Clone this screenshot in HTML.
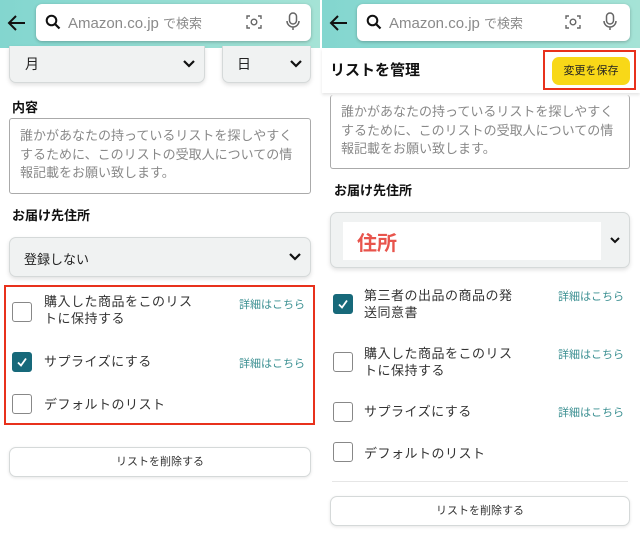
<!DOCTYPE html>
<html><head><meta charset="utf-8"><style>
*{margin:0;padding:0;box-sizing:border-box}
body{width:640px;height:552px;position:relative;background:#fff;font-family:"Liberation Sans","Noto Sans CJK JP",sans-serif;color:#222;overflow:hidden}
.a{position:absolute}
.hdr{position:absolute;top:0;height:48px;background:linear-gradient(90deg,#83d6cf,#a5e3d6)}
.sb{position:absolute;top:4px;height:37px;background:#fff;border-radius:6px;box-shadow:0 1px 3px rgba(0,0,0,.25)}
.sb .ph{position:absolute;left:32px;top:9px;font-size:15px;color:#8a8a8a}
.sel{position:absolute;background:#f0f2f2;border:1px solid #d5d9d9;border-radius:7px;box-shadow:0 2px 4px rgba(0,0,0,.12)}
.ta{position:absolute;border:1px solid #aaa;border-radius:3px;padding:8px 6px 8px 10px;font-size:13px;line-height:18.5px;color:#888;letter-spacing:0;white-space:nowrap}
.lbl{position:absolute;font-size:13px;font-weight:bold;color:#111}
.cb{position:absolute;width:20px;height:20px;border:1px solid #888;border-radius:3px;background:#fff}
.cb.on{background:#17697a;border-color:#17697a}
.t{position:absolute;font-size:13px;line-height:17px;color:#333;letter-spacing:.5px}
.lk{position:absolute;font-size:11px;color:#3a8f91;letter-spacing:0}
.btn{position:absolute;height:30px;border:1px solid #d5d9d9;border-radius:7px;background:#fff;box-shadow:0 1px 3px rgba(0,0,0,.1);font-size:11px;text-align:center;line-height:28px;color:#333}
</style></head><body>

<!-- LEFT -->
<div class="hdr" style="left:0;width:320px"></div>
<svg class="a" style="left:7px;top:13px" width="20" height="20" viewBox="0 0 20 20"><path d="M18 10H3M9 3L2 10l7 7" stroke="#111" stroke-width="2" fill="none"/></svg>
<div class="sb" style="left:36px;width:275px">
<svg class="a" style="left:9px;top:10px" width="16" height="16" viewBox="0 0 16 16"><circle cx="6.5" cy="6.5" r="4.8" stroke="#111" stroke-width="2" fill="none"/><path d="M10 10l4.5 4.5" stroke="#111" stroke-width="2.2"/></svg>
<div class="ph">Amazon.co.jp <span style="font-size:13px">で検索</span></div>
<svg class="a" style="left:210px;top:10px" width="16" height="16" viewBox="0 0 16 16" fill="none" stroke="#666" stroke-width="1.4"><path d="M1 5V2h3M12 2h3v3M15 11v3h-3M4 14H1v-3"/><circle cx="8" cy="8" r="2.8"/></svg>
<svg class="a" style="left:250px;top:8px" width="14" height="20" viewBox="0 0 14 20" fill="none" stroke="#666" stroke-width="1.5"><rect x="3.5" y="1" width="7" height="11" rx="3.5"/><path d="M1 9a6 6 0 0 0 12 0M7 15v3"/></svg>
</div>
<div class="sel" style="left:9px;top:46px;width:196px;height:37px;border-top:none;border-radius:0 0 7px 7px"><span class="a" style="left:15px;top:8px;font-size:14px">月</span>
<svg class="a" style="left:172px;top:13px" width="14" height="10" viewBox="0 0 14 10"><path d="M2 2l5 5 5-5" stroke="#111" stroke-width="2.2" fill="none"/></svg></div>
<div class="sel" style="left:222px;top:46px;width:89px;height:37px;border-top:none;border-radius:0 0 7px 7px"><span class="a" style="left:14px;top:8px;font-size:14px">日</span>
<svg class="a" style="left:66px;top:13px" width="14" height="10" viewBox="0 0 14 10"><path d="M2 2l5 5 5-5" stroke="#111" stroke-width="2.2" fill="none"/></svg></div>
<div class="lbl" style="left:12px;top:97px">内容</div>
<div class="ta" style="left:9px;top:118px;width:302px;height:76px">誰かがあなたの持っているリストを探しやすく<br>するために、このリストの受取人についての情<br>報記載をお願い致します。</div>
<div class="lbl" style="left:12px;top:205px">お届け先住所</div>
<div class="sel" style="left:9px;top:237px;width:302px;height:40px"><span class="a" style="left:14px;top:11px;font-size:13px">登録しない</span>
<svg class="a" style="left:278px;top:14px" width="14" height="10" viewBox="0 0 14 10"><path d="M2 2l5 5 5-5" stroke="#111" stroke-width="2.2" fill="none"/></svg></div>
<div class="a" style="left:4px;top:285px;width:311px;height:140px;border:2.5px solid #e8311c"></div>
<div class="cb" style="left:12px;top:302px"></div>
<div class="t" style="left:44px;top:293px">購入した商品をこのリス<br>トに保持する</div>
<div class="lk" style="left:239px;top:296px">詳細はこちら</div>
<div class="cb on" style="left:12px;top:352px"><svg width="18" height="18" viewBox="0 0 18 18"><path d="M5 9.5l3 3 5-7" stroke="#fff" stroke-width="1.8" fill="none"/></svg></div>
<div class="t" style="left:44px;top:353px">サプライズにする</div>
<div class="lk" style="left:239px;top:355px">詳細はこちら</div>
<div class="cb" style="left:12px;top:394px"></div>
<div class="t" style="left:44px;top:396px">デフォルトのリスト</div>
<div class="btn" style="left:9px;top:447px;width:302px">リストを削除する</div>

<!-- RIGHT -->
<div class="hdr" style="left:322px;width:318px"></div>
<svg class="a" style="left:329px;top:13px" width="20" height="20" viewBox="0 0 20 20"><path d="M18 10H3M9 3L2 10l7 7" stroke="#111" stroke-width="2" fill="none"/></svg>
<div class="sb" style="left:357px;width:273px">
<svg class="a" style="left:9px;top:10px" width="16" height="16" viewBox="0 0 16 16"><circle cx="6.5" cy="6.5" r="4.8" stroke="#111" stroke-width="2" fill="none"/><path d="M10 10l4.5 4.5" stroke="#111" stroke-width="2.2"/></svg>
<div class="ph">Amazon.co.jp <span style="font-size:13px">で検索</span></div>
<svg class="a" style="left:208px;top:10px" width="16" height="16" viewBox="0 0 16 16" fill="none" stroke="#666" stroke-width="1.4"><path d="M1 5V2h3M12 2h3v3M15 11v3h-3M4 14H1v-3"/><circle cx="8" cy="8" r="2.8"/></svg>
<svg class="a" style="left:246px;top:8px" width="14" height="20" viewBox="0 0 14 20" fill="none" stroke="#666" stroke-width="1.5"><rect x="3.5" y="1" width="7" height="11" rx="3.5"/><path d="M1 9a6 6 0 0 0 12 0M7 15v3"/></svg>
</div>
<div class="a" style="left:322px;top:48px;width:318px;height:45px;background:#fff;box-shadow:0 2px 3px rgba(0,0,0,.1)"></div>
<div class="a" style="left:330px;top:59px;font-size:15px;font-weight:bold;color:#111">リストを管理</div>
<div class="a" style="left:543px;top:50px;width:93px;height:40px;border:2.5px solid #e8311c"></div>
<div class="a" style="left:552px;top:57px;width:78px;height:28px;background:#f8d818;border-radius:7px;font-size:11px;text-align:center;line-height:28px;color:#222">変更を保存</div>
<div class="ta" style="left:330px;top:95px;width:300px;height:74px;border-top:none">誰かがあなたの持っているリストを探しやすく<br>するために、このリストの受取人についての情<br>報記載をお願い致します。</div>
<div class="lbl" style="left:334px;top:180px">お届け先住所</div>
<div class="sel" style="left:330px;top:212px;width:300px;height:56px">
<div class="a" style="left:12px;top:9px;width:258px;height:38px;background:#fff"></div>
<span class="a" style="left:26px;top:14px;font-size:20px;font-weight:bold;color:#e8544c">住所</span>
<svg class="a" style="left:278px;top:23px" width="12" height="9" viewBox="0 0 12 9"><path d="M2 2l4 4 4-4" stroke="#111" stroke-width="2" fill="none"/></svg></div>
<div class="cb on" style="left:333px;top:294px"><svg width="18" height="18" viewBox="0 0 18 18"><path d="M5 9.5l3 3 5-7" stroke="#fff" stroke-width="1.8" fill="none"/></svg></div>
<div class="t" style="left:364px;top:287px">第三者の出品の商品の発<br>送同意書</div>
<div class="lk" style="left:558px;top:288px">詳細はこちら</div>
<div class="cb" style="left:333px;top:352px"></div>
<div class="t" style="left:364px;top:345px">購入した商品をこのリス<br>トに保持する</div>
<div class="lk" style="left:558px;top:346px">詳細はこちら</div>
<div class="cb" style="left:333px;top:402px"></div>
<div class="t" style="left:364px;top:403px">サプライズにする</div>
<div class="lk" style="left:558px;top:404px">詳細はこちら</div>
<div class="cb" style="left:333px;top:442px"></div>
<div class="t" style="left:364px;top:445px">デフォルトのリスト</div>
<div class="a" style="left:332px;top:481px;width:296px;height:1px;background:#e6e6e6"></div>
<div class="btn" style="left:330px;top:496px;width:300px">リストを削除する</div>
</body></html>
